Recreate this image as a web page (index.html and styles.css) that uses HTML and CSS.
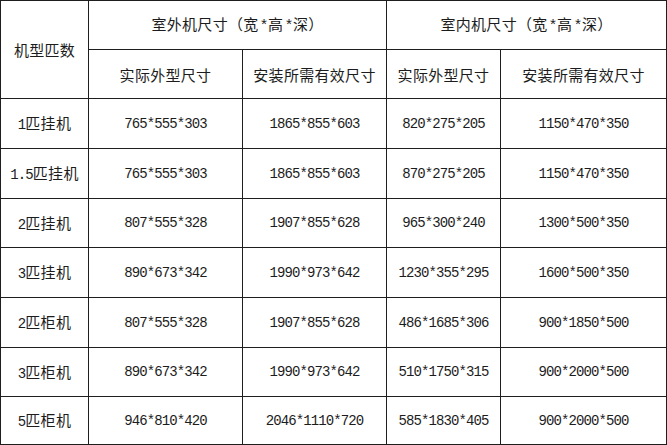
FILE: index.html
```html
<!DOCTYPE html>
<html lang="zh">
<head>
<meta charset="utf-8">
<link rel="stylesheet" href="styles.css">
</head>
<body>
<table class="spec">
  <colgroup>
    <col class="c1"><col class="c2"><col class="c3"><col class="c4"><col class="c5">
  </colgroup>
  <tr class="h1">
    <td rowspan="2" class="cjk">机型匹数</td>
    <td colspan="2" class="cjk">室外机尺寸（宽<span class="ast">*</span>高<span class="ast">*</span>深）</td>
    <td colspan="2" class="cjk">室内机尺寸（宽<span class="ast">*</span>高<span class="ast">*</span>深）</td>
  </tr>
  <tr class="h2">
    <td class="cjk">实际外型尺寸</td>
    <td class="cjk">安装所需有效尺寸</td>
    <td class="cjk">实际外型尺寸</td>
    <td class="cjk">安装所需有效尺寸</td>
  </tr>
  <tr class="ra">
    <td class="cjk"><span class="num">1</span>匹挂机</td>
    <td class="num">765*555*303</td><td class="num">1865*855*603</td>
    <td class="num">820*275*205</td><td class="num">1150*470*350</td>
  </tr>
  <tr class="ra">
    <td class="cjk"><span class="num">1.5</span>匹挂机</td>
    <td class="num">765*555*303</td><td class="num">1865*855*603</td>
    <td class="num">870*275*205</td><td class="num">1150*470*350</td>
  </tr>
  <tr class="rb">
    <td class="cjk"><span class="num">2</span>匹挂机</td>
    <td class="num">807*555*328</td><td class="num">1907*855*628</td>
    <td class="num">965*300*240</td><td class="num">1300*500*350</td>
  </tr>
  <tr class="ra">
    <td class="cjk"><span class="num">3</span>匹挂机</td>
    <td class="num">890*673*342</td><td class="num">1990*973*642</td>
    <td class="num">1230*355*295</td><td class="num">1600*500*350</td>
  </tr>
  <tr class="ra">
    <td class="cjk"><span class="num">2</span>匹柜机</td>
    <td class="num">807*555*328</td><td class="num">1907*855*628</td>
    <td class="num">486*1685*306</td><td class="num">900*1850*500</td>
  </tr>
  <tr class="rb">
    <td class="cjk"><span class="num">3</span>匹柜机</td>
    <td class="num">890*673*342</td><td class="num">1990*973*642</td>
    <td class="num">510*1750*315</td><td class="num">900*2000*500</td>
  </tr>
  <tr class="rc">
    <td class="cjk"><span class="num">5</span>匹柜机</td>
    <td class="num">946*810*420</td><td class="num">2046*1110*720</td>
    <td class="num">585*1830*405</td><td class="num">900*2000*500</td>
  </tr>
</table>
</body>
</html>
```
FILE: styles.css
```css
html, body {
  margin: 0;
  padding: 0;
  background: #ffffff;
}
.spec {
  border-collapse: collapse;
  table-layout: fixed;
  width: 666px;
  height: 444px;
  color: #1c1c1c;
  font-family: "Noto Sans CJK SC", "Noto Sans", sans-serif;
  font-size: 15px;
}
.c1 { width: 88px; }
.c2 { width: 154px; }
.c3 { width: 144px; }
.c4 { width: 114px; }
.c5 { width: 166px; }
.spec td {
  border: 1px solid #1e1e1e;
  text-align: center;
  vertical-align: middle;
  padding: 0;
  line-height: 1;
}
.h1, .h2 { height: 49px; }
.ra { height: 50px; }
.rb { height: 49px; }
.rc { height: 48px; }
.cjk {
  font-family: "Noto Sans CJK SC", "Noto Sans", sans-serif;
  font-weight: 400;
  letter-spacing: 0.3px;
}
.num {
  font-family: "Liberation Mono", "DejaVu Sans Mono", monospace;
  font-size: 14px;
  letter-spacing: -0.9px;
  padding-top: 3px;
}
.ast {
  font-family: "Liberation Mono", monospace;
  font-size: 15px;
  letter-spacing: -1.5px;
  margin: 0 1px;
}
```
